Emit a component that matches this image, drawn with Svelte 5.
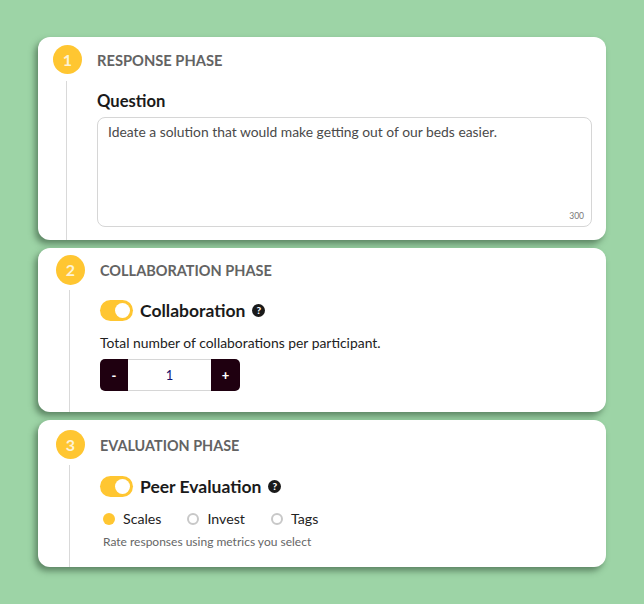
<script>
	let rounds = $state(1);
	const types = ['Scales', 'Invest', 'Tags'];
	let evalType = $state('Scales');
</script>

<div class="page">
	<section class="phase first">
		<div class="phase-header">
			<span class="num">1</span>
			<h2>RESPONSE PHASE</h2>
		</div>
		<div class="phase-body">
			<h3 class="question">Question</h3>
			<div class="textbox">
				<p>Ideate a solution that would make getting out of our beds easier.</p>
				<span class="count">300</span>
			</div>
		</div>
	</section>

	<section class="phase second">
		<div class="phase-header">
			<span class="num">2</span>
			<h2>COLLABORATION PHASE</h2>
		</div>
		<div class="phase-body">
			<div class="toggle-row">
				<span class="toggle"><span class="knob"></span></span>
				<h3>Collaboration</h3>
				<span class="help">?</span>
			</div>
			<p class="desc">Total number of collaborations per participant.</p>
			<div class="stepper">
				<button type="button" onclick={() => (rounds = Math.max(1, rounds - 1))}>-</button>
				<span class="value">{rounds}</span>
				<button type="button" onclick={() => rounds++}>+</button>
			</div>
		</div>
	</section>

	<section class="phase third">
		<div class="phase-header">
			<span class="num">3</span>
			<h2>EVALUATION PHASE</h2>
		</div>
		<div class="phase-body">
			<div class="toggle-row">
				<span class="toggle"><span class="knob"></span></span>
				<h3>Peer Evaluation</h3>
				<span class="help">?</span>
			</div>
			<div class="radios">
				{#each types as t}
					<button type="button" class="radio" onclick={() => (evalType = t)}>
						<span class="dot" class:on={evalType === t}></span>
						{t}
					</button>
				{/each}
			</div>
			<p class="hint">Rate responses using metrics you select</p>
		</div>
	</section>
</div>

<style>
	:global(body) {
		margin: 0;
		background-color: #9dd4a6;
		font-family: 'Lato', sans-serif;
	}

	.page {
		display: flex;
		flex-direction: column;
		gap: 8px;
		padding: 37px 38px;
		height: 604px;
		box-sizing: border-box;
	}

	.phase {
		background-color: #fff;
		border-radius: 12px;
		box-shadow: -3px 4px 6px rgba(40, 70, 45, 0.55);
		padding-top: 8px;
		display: flex;
		flex-direction: column;
		box-sizing: border-box;
	}

	.first {
		height: 203px;
		padding-left: 15px;
	}

	.second {
		height: 164px;
		padding-top: 7px;
		padding-left: 18px;
	}

	.second .num {
		height: 30px;
	}

	.third {
		height: 147px;
		padding-top: 10px;
		padding-left: 18px;
	}

	.phase-header {
		display: flex;
		align-items: center;
		gap: 15px;
		height: 29px;
	}

	.num {
		width: 29px;
		height: 29px;
		border-radius: 50%;
		background-color: #ffc631;
		color: #fdf3d6;
		font-size: 16px;
		font-weight: 700;
		display: flex;
		align-items: center;
		justify-content: center;
	}

	h2 {
		margin: 1px 0 0;
		font-size: 14.7px;
		font-weight: 700;
		color: #636363;
	}

	.second h2 {
		font-size: 14.5px;
	}

	.third h2 {
		font-size: 14.4px;
		margin-top: 1px;
	}

	.phase-body {
		flex: 1;
		margin-top: 6px;
		margin-left: 13px;
		border-left: 1px solid #d9d9d9;
		padding-left: 30px;
		padding-right: 14px;
	}

	.first .phase-body {
		margin-top: 7px;
	}

	h3 {
		margin: 0;
		font-size: 17.5px;
		font-weight: 700;
		color: #1a1a1a;
	}

	.question {
		margin-top: 9px;
		font-size: 16.6px;
		line-height: 22px;
	}

	.textbox {
		position: relative;
		box-sizing: border-box;
		margin-top: 5px;
		height: 110px;
		border: 1px solid #d6d6d6;
		border-radius: 8px;
	}

	.textbox p {
		margin: 0;
		padding: 5px 10px;
		font-size: 13.85px;
		line-height: 18px;
		color: #4a4a4a;
	}

	.count {
		position: absolute;
		right: 7px;
		bottom: 5px;
		font-size: 8.5px;
		color: #777;
	}

	.toggle-row {
		display: flex;
		align-items: center;
		margin-top: 9px;
		height: 22px;
	}

	.third .toggle-row {
		margin-top: 10px;
	}

	.toggle {
		width: 33px;
		height: 21px;
		border-radius: 11px;
		background-color: #ffc631;
		position: relative;
		margin-right: 7px;
	}

	.knob {
		position: absolute;
		right: 3px;
		top: 3px;
		width: 15px;
		height: 15px;
		border-radius: 50%;
		background-color: #fff;
	}

	.help {
		width: 13px;
		height: 13px;
		margin-left: 7px;
		border-radius: 50%;
		background-color: #1a1a1a;
		color: #fff;
		font-size: 10px;
		font-weight: 900;
		display: flex;
		align-items: center;
		justify-content: center;
	}

	.desc {
		margin: 13px 0 0;
		font-size: 13.9px;
		line-height: 18px;
		color: #222;
	}

	.stepper {
		display: flex;
		margin-top: 7px;
		width: 140px;
		height: 32px;
	}

	.stepper button {
		width: 28px;
		border: none;
		padding: 0;
		background-color: #1f0010;
		color: #fff;
		font-family: inherit;
		font-size: 13px;
		font-weight: 900;
		cursor: pointer;
	}

	.stepper button:first-child {
		border-radius: 5px 0 0 5px;
	}

	.stepper button:last-child {
		width: 29px;
		border-radius: 0 5px 5px 0;
	}

	.value {
		flex: 1;
		border-top: 1px solid #d6d6d6;
		border-bottom: 1px solid #d6d6d6;
		display: flex;
		align-items: center;
		justify-content: center;
		font-size: 13px;
		color: #14146e;
	}

	.radios {
		display: flex;
		gap: 26px;
		margin-top: 13px;
		padding-left: 3px;
	}

	.radio {
		display: flex;
		align-items: center;
		gap: 8px;
		border: none;
		padding: 0;
		background: none;
		font-family: inherit;
		font-size: 14.2px;
		line-height: 18px;
		color: #222;
		cursor: pointer;
	}

	.dot {
		width: 12px;
		height: 12px;
		box-sizing: border-box;
		border-radius: 50%;
		border: 2px solid #c8c8c8;
	}

	.dot.on {
		border: none;
		background-color: #ffc631;
	}

	.hint {
		margin: 7px 0 0 3px;
		font-size: 12px;
		line-height: 14px;
		color: #666;
	}
</style>
